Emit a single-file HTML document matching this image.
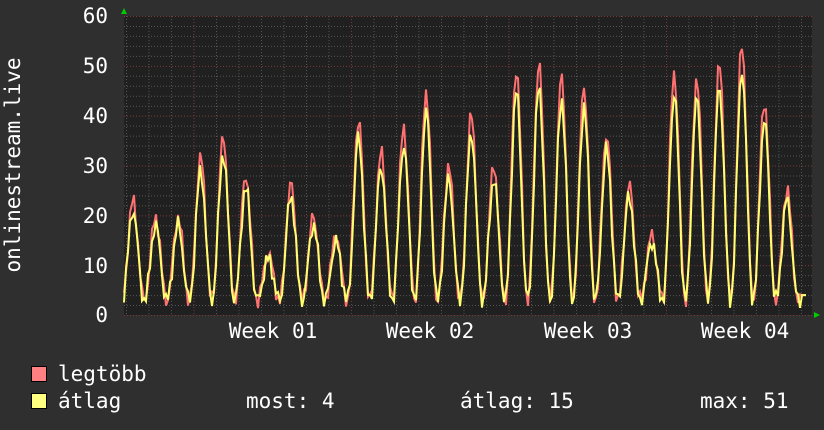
<!DOCTYPE html>
<html><head><meta charset="utf-8"><style>
body{margin:0;background:#2f2f2f;width:824px;height:430px;overflow:hidden}
svg{display:block}
text{font-family:"DejaVu Sans Mono","Liberation Mono",monospace;font-size:21px;fill:#fff}
</style></head><body>
<svg id="s" width="824" height="430" xmlns="http://www.w3.org/2000/svg">
<rect width="824" height="430" fill="#2f2f2f"/>
<rect x="124" y="16" width="688" height="299" fill="#202020"/>
<g id="grid"></g>
<g id="data"></g>
<polygon points="121,14 127,14 124,8" fill="#0c0"/>
<polygon points="814,312 814,318 820,315" fill="#0c0"/>
<g text-anchor="end">
<text x="108" y="23">60</text><text x="108" y="73">50</text><text x="108" y="123">40</text>
<text x="108" y="173">30</text><text x="108" y="223">20</text><text x="108" y="273">10</text>
<text x="108" y="322">0</text>
</g>
<g text-anchor="middle">
<text x="273" y="338">Week 01</text><text x="430" y="338">Week 02</text>
<text x="588" y="338">Week 03</text><text x="745" y="338">Week 04</text>
</g>
<text transform="translate(20,165) rotate(-90)" text-anchor="middle">onlinestream.live</text>
<rect x="31.5" y="366.5" width="15" height="15" fill="#ff8080" stroke="#000"/>
<rect x="31.5" y="393.5" width="15" height="15" fill="#ffff80" stroke="#000"/>
<text x="58" y="381">legtöbb</text>
<text x="58" y="408">átlag</text>
<text x="246" y="408">most: 4</text>
<text x="460" y="408">átlag: 15</text>
<text x="700" y="408">max: 51</text>
</svg>
<script>
var ns="http://www.w3.org/2000/svg",g=document.getElementById('grid'),d=document.getElementById('data');
function ln(x1,y1,x2,y2,c,dash){var l=document.createElementNS(ns,'line');l.setAttribute('x1',x1);l.setAttribute('y1',y1);l.setAttribute('x2',x2);l.setAttribute('y2',y2);l.setAttribute('stroke',c);l.setAttribute('stroke-width',1);if(dash)l.setAttribute('stroke-dasharray',dash);g.appendChild(l);}
for(var v=0;v<=60;v+=2){var y=315-v*299/60+0.5;ln(124,y,812,y,v%10==0?'#7a3a3a':'#555','1,2');}
for(var x=126.5;x<812;x+=22.5){ln(x,16,x,315,'#555','1,2');}
[194,351.5,509,666.5].forEach(function(x){ln(x,16,x,315,'#7a3a3a','1,2');});
var peaks=[21.5,18,18,31,35,27,10,25,18,14,39,32,37,45,29,40,29,50,51,48,46,36,25,14,49,48,51,55,43,24];
var centers=[];for(var i=0;i<30;i++)centers.push(133+i*22.55);
function val(x,scale,seed){var best=0;for(var i=0;i<30;i++){var dx=(x-centers[i])/22.5;var t=Math.cos(Math.max(-0.5,Math.min(0.5,dx))*Math.PI);var p=peaks[i]*scale;var s=Math.pow(Math.max(0,t),2.2);best=Math.max(best,p*s);}
var n=Math.sin(x*1.7+seed)*1.2+Math.sin(x*0.63+seed*2)*0.8;return Math.max(0.5,best+3+n);}
function poly(scale,seed,col){var pts=[];for(var x=124;x<=806;x+=2){var v=val(x,scale,seed);if(x>800)v=4;pts.push(x+','+(315-v*299/60).toFixed(1));}
var p=document.createElementNS(ns,'polyline');p.setAttribute('points',pts.join(' '));p.setAttribute('fill','none');p.setAttribute('stroke',col);p.setAttribute('stroke-width',2);d.appendChild(p);}
poly(0.93,0,'#ff7070');poly(0.84,1.3,'#ffff70');
</script>
</body></html>
